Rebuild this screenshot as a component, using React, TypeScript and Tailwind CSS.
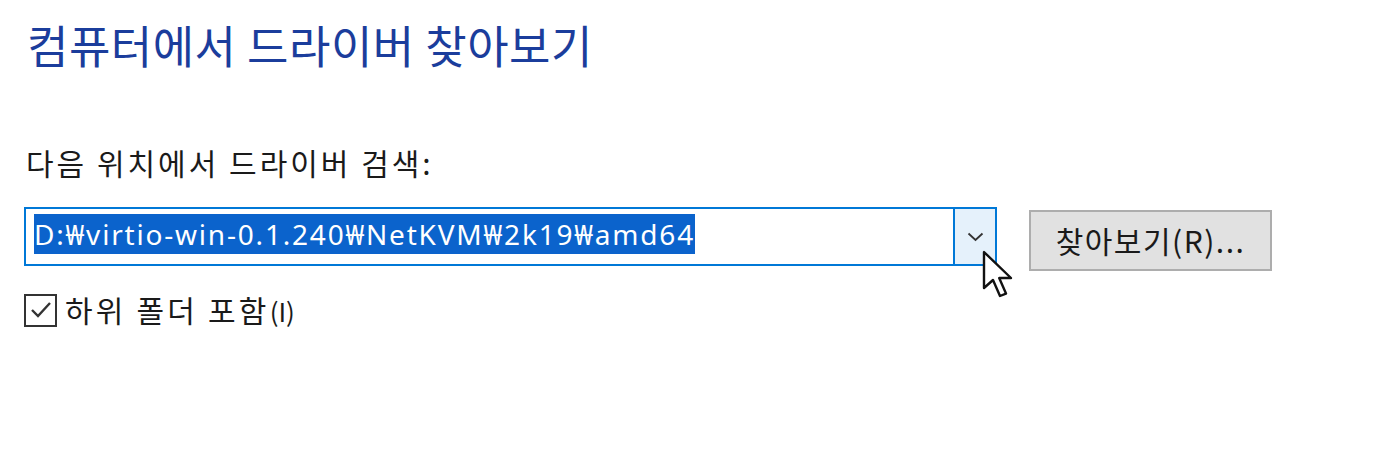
const kr = { fontFamily: '"Noto Sans CJK KR", "Noto Sans", sans-serif' };
const latin = { fontFamily: '"Noto Sans", "Noto Sans CJK KR", sans-serif' };

const Cursor = () => (
  <svg
    className="absolute left-[982px] top-[250px]"
    width="36"
    height="52"
    viewBox="0 0 18 26"
  >
    <path
      d="M1 1 L1 19 L5.5 15 L9 23 L12 21.8 L8.6 14 L14.5 14 Z"
      fill="#fff"
      stroke="#111"
      strokeWidth="1.2"
      strokeLinejoin="round"
    />
  </svg>
);

export default function App() {
  return (
    <div className="relative w-[1398px] h-[476px] bg-white pl-[24px] pt-[17px] text-[#1a1a1a]" style={kr}>
      <h1 className="pl-[3px] text-[45px] leading-[56px] text-[#1b3d9c] tracking-[0.5px]">
        컴퓨터에서 드라이버 찾아보기
      </h1>

      <p className="mt-[71px] pl-[2px] text-[30px] leading-[36px] tracking-[3px]">다음 위치에서 드라이버 검색:</p>

      <div className="mt-[27px] flex items-start">
        <div className="flex h-[59px] w-[973px] border-2 border-[#0078d7]">
          <div className="flex flex-1 items-start pl-[8px] pt-[5px]">
            <span
              className="bg-[#0b63cc] text-white text-[28px] leading-[40px] h-[40px] tracking-[1.8px]"
              style={latin}
            >
              D:₩virtio-win-0.1.240₩NetKVM₩2k19₩amd64
            </span>
          </div>
          <div className="flex w-[42px] items-center justify-center border-l-2 border-[#0078d7] bg-[#e5f1fb]">
            <svg width="17" height="10" viewBox="0 0 17 10">
              <path d="M1.5 1.5 L8.5 8 L15.5 1.5" fill="none" stroke="#333" strokeWidth="1.8" />
            </svg>
          </div>
        </div>

        <button className="ml-[32px] mt-[3px] flex h-[61px] w-[243px] items-center justify-center border-2 border-[#adadad] bg-[#e1e1e1] text-[30px] tracking-[1.5px] text-[#1a1a1a]">
          찾아보기(R)...
        </button>
      </div>

      <label className="mt-[20px] flex items-center gap-[8px]">
        <span className="flex h-[33px] w-[33px] items-center justify-center border-2 border-[#333]">
          <svg width="24" height="20" viewBox="0 0 24 20">
            <path d="M3 10 L9 16 L21 3" fill="none" stroke="#333" strokeWidth="2.4" />
          </svg>
        </span>
        <span className="text-[30px] leading-[36px] tracking-[3.2px]">
          하위 폴더 포함<span className="text-[26px] tracking-normal">(I)</span>
        </span>
      </label>

      <Cursor />
    </div>
  );
}
